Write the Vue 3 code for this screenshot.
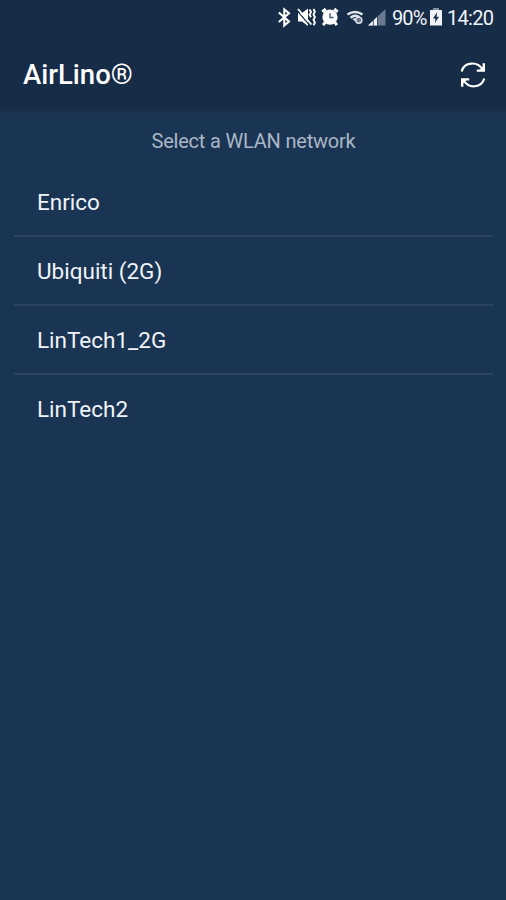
<template>
  <div class="screen">
    <div class="top">
      <div class="status-bar">
        <svg class="status-icons" viewBox="0 0 120 36" width="120" height="36">
          <!-- bluetooth -->
          <path
            d="M8.8 12.5 L19 21.5 L14.3 25.5 V9.5 L19 13.2 L8.8 22"
            fill="none"
            stroke="#fff"
            stroke-width="2.1"
          />
          <!-- muted with vibration -->
          <path d="M28 13 h4 l6 -4.5 v17.5 l-6 -4.5 h-4z" fill="#fff" />
          <path d="M27 10.6 L40 25.6" stroke="#172c47" stroke-width="1.2" />
          <path d="M28 9 L41.4 24.5" stroke="#fff" stroke-width="1.8" />
          <path
            d="M39.6 9.5 l1.4 2.6 l-1.4 2.6 l1.4 2.6 M43.5 9 l1.4 2.7 l-1.4 2.7 l1.4 2.7 l-1.4 2.7 l1.4 2.7 l-1.4 2.7"
            fill="none"
            stroke="#fff"
            stroke-width="1.9"
          />
          <!-- alarm -->
          <circle cx="60" cy="17.2" r="7.6" fill="#fff" />
          <path
            d="M52.3 11.8 l3.5 -2.8 M67.7 11.8 l-3.5 -2.8 M55 22.5 l-1.8 2.7 M65 22.5 l1.8 2.7"
            stroke="#fff"
            stroke-width="3"
          />
          <path
            d="M60 13.2 V17.5 H63.5"
            fill="none"
            stroke="#43566d"
            stroke-width="1.4"
          />
          <!-- wifi -->
          <path
            d="M77.5 14.6 Q85 9.4 92.5 14.6 M80.5 17.8 Q85 14.2 89.5 17.2"
            fill="none"
            stroke="#e2e7ed"
            stroke-width="2.4"
          />
          <path d="M82.3 19 Q85 17.4 87 19 L86.5 22.5z" fill="#e2e7ed" />
          <circle
            cx="88.8"
            cy="20.2"
            r="3.1"
            fill="#68778a"
            stroke="#dfe4ea"
            stroke-width="1.4"
          />
          <!-- signal -->
          <path d="M98 25.5 L115.5 9 V25.5z" fill="#6b7b8f" />
          <path d="M98 25.5 L107 17 V25.5z" fill="#f2f4f7" />
          <path d="M103.4 19 V26 M107.5 15 V26" stroke="#263c56" stroke-width=".8" />
        </svg>
        <span class="percent">90%</span>
        <svg class="battery" viewBox="0 0 12 18" width="12" height="18">
          <path d="M3.5 0 h5 v2 H12 V17.5 H0 V2 h3.5z" fill="#f1f4f7" />
          <path d="M3.5 0 h5 v2 h-5z" fill="#8190a1" />
          <path d="M7.2 4 L3 10.5 h2.5 L4.8 15 L9 8.8 H6.5z" fill="#172c47" />
        </svg>
        <span class="time">14:20</span>
      </div>
      <header class="header">
        <h1 class="title">AirLino<span class="mark">®</span></h1>
        <button class="refresh" aria-label="Refresh">
          <svg viewBox="0 0 26 28" width="26" height="28">
            <path
              d="M1.7 10.5 C4 .5 18 -.2 22.8 9 M24.3 17.5 C21.5 27 9 28.2 3.2 19"
              fill="none"
              stroke="#fff"
              stroke-width="2.2"
            />
            <path
              d="M23.8 2.3 V9.6 H16.8 M2.2 25.8 V18.4 H9.2"
              fill="none"
              stroke="#fff"
              stroke-width="2.4"
            />
            <path d="M23.8 5 V9.6 H19z M2.2 23 V18.4 H7z" fill="#fff" />
          </svg>
        </button>
      </header>
    </div>

    <p class="hint">Select a WLAN network</p>

    <ul class="networks">
      <li v-for="name in networks" :key="name" class="network">{{ name }}</li>
    </ul>
  </div>
</template>

<script setup>
const networks = ["Enrico", "Ubiquiti (2G)", "LinTech1_2G", "LinTech2"];
</script>

<style>
body {
  margin: 0;
  background: #1a3553;
}
</style>

<style scoped>
.screen {
  height: 100vh;
  overflow: hidden;
  background: #1a3553;
  color: #f0f3f8;
  font-family: Roboto, sans-serif;
}

.top {
  height: 113px;
  background: linear-gradient(#172c47 107px, #1a3553 117px);
}

.status-bar {
  display: flex;
  height: 36px;
  padding-left: 270px;
  line-height: 36px;
  font-size: 20px;
  white-space: nowrap;
}

.status-icons {
  flex: none;
}

.percent {
  width: 40px;
  padding-left: 2px;
  letter-spacing: -0.9px;
}

.battery {
  flex: none;
  margin-top: 8px;
  margin-left: -2px;
}

.time {
  margin-left: 5px;
  letter-spacing: -0.7px;
}

.header {
  display: flex;
  align-items: center;
  justify-content: space-between;
  height: 77px;
  padding: 0 20px 0 23px;
}

.title {
  margin: 0;
  font-size: 27.5px;
  line-height: 32px;
  font-weight: 500;
  color: #fff;
}

.mark {
  font-size: 28px;
  font-weight: 400;
}

.refresh {
  display: flex;
  padding: 0;
  border: none;
  background: none;
}

.hint {
  margin: 0;
  padding-top: 16px;
  padding-left: 1px;
  height: 39px;
  line-height: 25px;
  font-size: 20px;
  letter-spacing: -0.2px;
  text-align: center;
  color: #aab6c5;
}

.networks {
  margin: 0 13px 0 14px;
  padding: 0;
  list-style: none;
}

.network {
  height: 67px;
  padding-left: 23px;
  line-height: 69px;
  font-size: 22.5px;
  border-bottom: 2px solid #2b4560;
}

.network:last-child {
  border-bottom: none;
}
</style>
